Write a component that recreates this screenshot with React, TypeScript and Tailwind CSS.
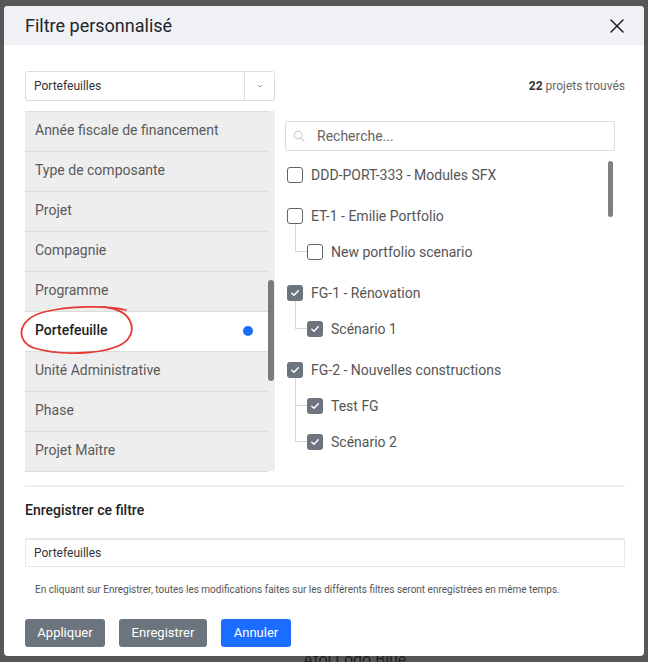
import React from "react";

type Node = { label: string; checked: boolean; children?: Node[] };

const categories = [
  "Année fiscale de financement",
  "Type de composante",
  "Projet",
  "Compagnie",
  "Programme",
  "Portefeuille",
  "Unité Administrative",
  "Phase",
  "Projet Maître",
];

const tree: Node[] = [
  { label: "DDD-PORT-333 - Modules SFX", checked: false },
  {
    label: "ET-1 - Emilie Portfolio",
    checked: false,
    children: [{ label: "New portfolio scenario", checked: false }],
  },
  {
    label: "FG-1 - Rénovation",
    checked: true,
    children: [{ label: "Scénario 1", checked: true }],
  },
  {
    label: "FG-2 - Nouvelles constructions",
    checked: true,
    children: [
      { label: "Test FG", checked: true },
      { label: "Scénario 2", checked: true },
    ],
  },
];

function Checkbox({ checked }: { checked: boolean }) {
  if (checked) {
    return (
      <span className="flex h-4 w-4 shrink-0 items-center justify-center rounded-[3px] bg-[#6c757d]">
        <svg width="10" height="10" viewBox="0 0 10 10" fill="none">
          <path d="M1.8 5.2 L4 7.3 L8.3 2.8" stroke="white" strokeWidth="1.5" strokeLinecap="round" strokeLinejoin="round" />
        </svg>
      </span>
    );
  }
  return <span className="h-4 w-4 shrink-0 rounded-[3px] border-[1.5px] border-[#5f6368] bg-white" />;
}

export default function App() {
  return (
    <div className="h-[662px] w-full overflow-hidden bg-[#575757] pt-[6px] pl-[4px] font-['Roboto',sans-serif]">
      <div className="relative flex h-[650px] w-[640px] flex-col overflow-hidden rounded-[4px] bg-white">
        {/* Header */}
        <div className="flex h-[39px] shrink-0 items-center justify-between bg-[#f1f2f6] pl-[21px] pr-[20px]">
          <h1 className="text-[18px] text-[#212529]">Filtre personnalisé</h1>
          <svg width="14" height="14" viewBox="0 0 14 14" fill="none">
            <path d="M1 1 L13 13 M13 1 L1 13" stroke="#222" strokeWidth="1.5" strokeLinecap="round" />
          </svg>
        </div>

        {/* Body */}
        <div className="flex flex-col pl-[21px] pr-[19px] pt-[26px]">
          <div className="flex items-center justify-between">
            <div className="flex h-[30px] w-[250px] items-stretch rounded-[3px] border border-[#dcdcdc]">
              <span className="flex flex-1 items-center pl-[8px] text-[12px] text-[#333]">Portefeuilles</span>
              <span className="flex w-[30px] items-center justify-center border-l border-[#dcdcdc]">
                <svg width="6" height="4" viewBox="0 0 6 4" fill="none">
                  <path d="M1 1 L3 3 L5 1" stroke="#999" strokeWidth="1" />
                </svg>
              </span>
            </div>
            <span className="text-[12px] text-[#666]">
              <span className="font-bold text-[#333]">22</span> projets trouvés
            </span>
          </div>

          <div className="mt-[10px] flex gap-[10px]">
            {/* Category list */}
            <div className="flex h-[360px] w-[250px] bg-[#eeeeee]">
              <div className="flex w-[243px] flex-col border-t border-[#dcdcdc]">
                {categories.map((c) => {
                  const active = c === "Portefeuille";
                  return (
                    <div
                      key={c}
                      className={`flex h-[40px] shrink-0 items-center justify-between border-b border-[#dcdcdc] pb-[2px] pl-[10px] pr-[15px] text-[14px] ${
                        active ? "bg-white font-medium text-[#222]" : "text-[#5a5a5a]"
                      }`}
                    >
                      <span>{c}</span>
                      {active && <span className="h-[10px] w-[10px] rounded-full bg-[#1a6ef5]" />}
                    </div>
                  );
                })}
              </div>
              <div className="w-[7px] pt-[169px]">
                <div className="h-[101px] w-[6px] rounded-full bg-[#7a7a7a]" />
              </div>
            </div>

            {/* Tree */}
            <div className="flex w-[330px] flex-col pt-[10px]">
              <div className="flex h-[30px] items-center gap-[12px] rounded-[2px] border border-[#dcdcdc] pl-[7px]">
                <svg width="12" height="12" viewBox="0 0 12 12" fill="none">
                  <circle cx="5" cy="5" r="3.8" stroke="#cfcfcf" strokeWidth="1.2" />
                  <path d="M7.8 7.8 L11 11" stroke="#cfcfcf" strokeWidth="1.2" strokeLinecap="round" />
                </svg>
                <span className="text-[14px] text-[#666]">Recherche...</span>
              </div>
              <div className="mt-[6px] flex">
                <div className="flex flex-1 flex-col pl-[2px]">
                  {tree.map((n, gi) => (
                    <div key={n.label} className={gi > 0 ? "mt-[5px]" : ""}>
                      <div className="flex h-[36px] items-center gap-[8px] text-[14px] text-[#555]">
                        <Checkbox checked={n.checked} />
                        <span>{n.label}</span>
                      </div>
                      {(n.children ?? []).map((ch, ci) => (
                        <div key={ch.label} className="relative flex h-[36px] items-center gap-[8px] pl-[20px] text-[14px] text-[#555]">
                          <span
                            className={`absolute left-[8px] w-[12px] border-b border-l border-[#d6d6d6] ${
                              ci === 0 ? "top-[-10px] h-[28px]" : "top-[-18px] h-[36px]"
                            }`}
                          />
                          <Checkbox checked={ch.checked} />
                          <span>{ch.label}</span>
                        </div>
                      ))}
                    </div>
                  ))}
                </div>
                <div className="w-[7px] pt-[4px]">
                  <div className="h-[56px] w-[5px] rounded-full bg-[#808080]" />
                </div>
              </div>
            </div>
          </div>

          <div className="mt-[14px] h-[2px] bg-[#eeeeee]" />

          <h2 className="mt-[13px] text-[14px] font-medium text-[#222]">Enregistrer ce filtre</h2>

          <div className="mt-[17px] flex h-[29px] items-center border border-t-2 border-[#e8e8e8] pl-[8px] text-[12px] text-[#333]">
            Portefeuilles
          </div>

          <p className="mt-[15px] pl-[10px] text-[10px] text-[#555]">
            En cliquant sur Enregistrer, toutes les modifications faites sur les différents filtres seront enregistrées en même temps.
          </p>

          <div className="mt-[22px] flex gap-[14px]">
            <button className="h-[28px] w-[80px] rounded-[3px] bg-[#6c757d] text-[13px] text-white">Appliquer</button>
            <button className="h-[28px] w-[88px] rounded-[3px] bg-[#6c757d] text-[13px] text-white">Enregistrer</button>
            <button className="h-[28px] w-[70px] rounded-[3px] bg-[#1a6dff] text-[13px] text-white">Annuler</button>
          </div>
        </div>

        {/* hand-drawn annotation */}
        <svg className="pointer-events-none absolute left-0 top-0" width="200" height="400" viewBox="0 0 200 400" fill="none">
          <path
            d="M100 301 C128 304 132 322 124 333 C112 348 60 351 30 342 C11 335 13 313 40 306 C64 300 102 299 122 304"
            stroke="#e53935"
            strokeWidth="1.8"
            strokeLinecap="round"
          />
        </svg>
      </div>
      <div className="h-[6px] overflow-hidden pl-[299px]">
        <span className="-mt-[6px] block text-[16px] leading-[20px] text-[#1f1f1f]">Atoi Logo Blue</span>
      </div>
    </div>
  );
}
